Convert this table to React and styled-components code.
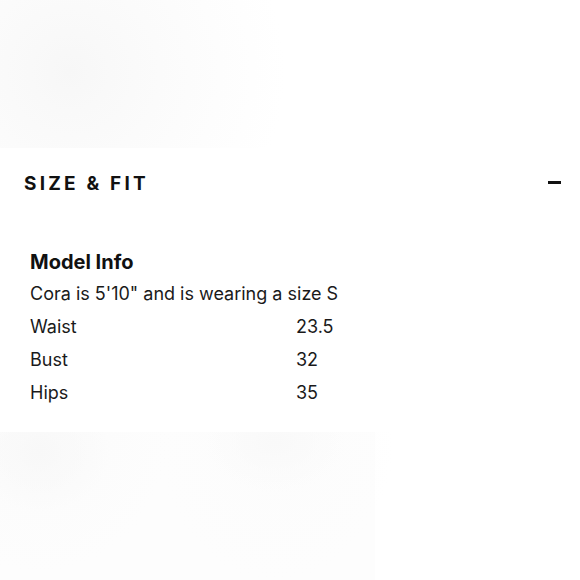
import React from 'react'
import styled, { createGlobalStyle } from 'styled-components'

const GlobalStyle = createGlobalStyle`
	html, body {
		margin: 0;
		padding: 0;
		background: #ffffff;
	}
	body {
		font-family: 'Inter', 'Liberation Sans', sans-serif;
		color: #111111;
	}
`

const measurements = [
	{ label: 'Waist', value: '23.5' },
	{ label: 'Bust', value: '32' },
	{ label: 'Hips', value: '35' },
]

const App = () => {
	return (
		<Page>
			<GlobalStyle />
			<TopGlow />
			<Section>
				<SectionHeader>
					<SectionTitle>SIZE &amp; FIT</SectionTitle>
					<Minus aria-label="Collapse" />
				</SectionHeader>
				<Body>
					<InfoTitle>Model Info</InfoTitle>
					<InfoLine>Cora is 5'10" and is wearing a size S</InfoLine>
					<Table>
						{measurements.map(m => (
							<React.Fragment key={m.label}>
								<Cell>{m.label}</Cell>
								<Cell>{m.value}</Cell>
							</React.Fragment>
						))}
					</Table>
				</Body>
			</Section>
			<BottomGlow />
		</Page>
	)
}

const Page = styled.div`
	width: 580px;
	height: 580px;
	overflow: hidden;
	display: flex;
	flex-direction: column;
	background: #ffffff;
`

const TopGlow = styled.div`
	height: 148px;
	flex-shrink: 0;
	background:
		radial-gradient(circle at 70px 72px, #f7f7f7 0, #f9f9f9 40px, #fbfbfb 90px, #fdfdfd 150px, rgba(255, 255, 255, 0) 215px);
`

const Section = styled.section`
	display: flex;
	flex-direction: column;
	height: 284px;
	flex-shrink: 0;
`

const SectionHeader = styled.div`
	height: 70px;
	display: flex;
	align-items: center;
	justify-content: space-between;
	padding: 0 19px 0 24px;
`

const SectionTitle = styled.h2`
	margin: 0;
	font-size: 19px;
	font-weight: 700;
	letter-spacing: 3.2px;
	color: #111111;
`

const Minus = styled.span`
	display: block;
	width: 13px;
	height: 3px;
	background: #111111;
	margin-top: -2px;
`

const Body = styled.div`
	padding: 28px 30px 0 30px;
`

const InfoTitle = styled.h3`
	margin: 0;
	font-size: 20px;
	line-height: 32px;
	font-weight: 700;
	color: #111111;
`

const InfoLine = styled.p`
	margin: 0;
	font-size: 18px;
	line-height: 32px;
	color: #1a1a1a;
`

const Table = styled.div`
	display: grid;
	grid-template-columns: 266px auto;
	grid-auto-rows: 33px;
	align-items: center;
`

const Cell = styled.span`
	font-size: 18px;
	color: #1a1a1a;
`

const BottomGlow = styled.div`
	flex: 1;
	background:
		radial-gradient(ellipse 70px 60px at 40px 20px, #f8f8f8 0, rgba(248, 248, 248, 0) 100%),
		radial-gradient(ellipse 130px 140px at 40px 0px, #fbfbfb 0, rgba(251, 251, 251, 0) 100%),
		radial-gradient(ellipse 70px 50px at 275px 10px, #f9f9f9 0, rgba(249, 249, 249, 0) 100%),
		radial-gradient(ellipse 120px 150px at 275px 0px, #fcfcfc 0, rgba(252, 252, 252, 0) 100%),
		linear-gradient(#fdfdfd, #fdfdfd);
	background-size: 100% 100%, 100% 100%, 100% 100%, 100% 100%, 375px 100%;
	background-repeat: no-repeat;
`

export default App
